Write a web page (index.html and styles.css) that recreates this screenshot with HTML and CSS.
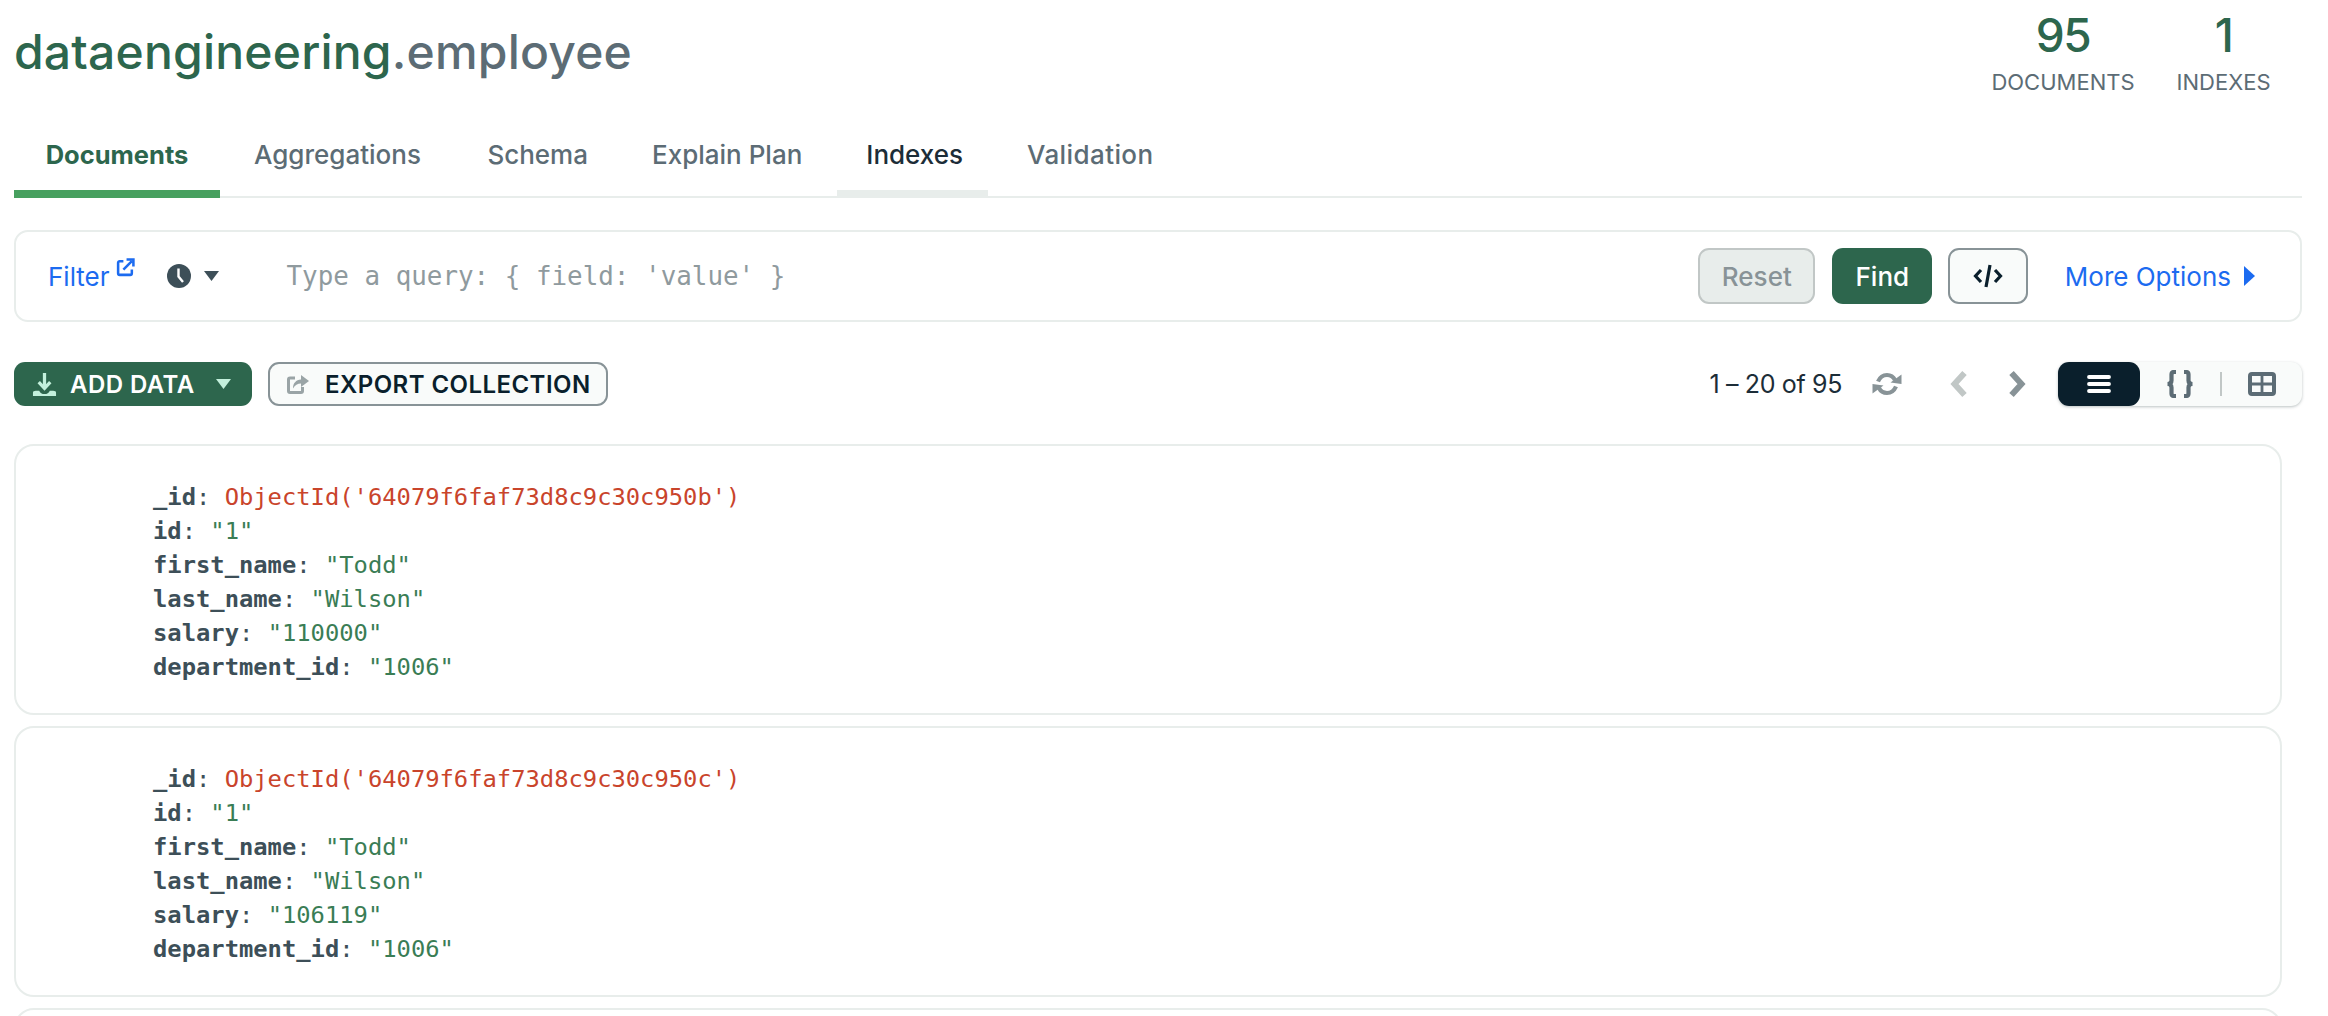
FILE: index.html
```html
<!DOCTYPE html>
<html lang="en">
<head>
<meta charset="utf-8">
<title>dataengineering.employee</title>
<link rel="stylesheet" href="styles.css">
</head>
<body>
<main class="page">
  <header class="head">
    <h1 class="title"><span class="db">dataengineering</span><span class="coll">.employee</span></h1>
    <div class="stats">
      <div class="stat stat-docs"><div class="num">95</div><div class="lab">DOCUMENTS</div></div>
      <div class="stat stat-idx"><div class="num">1</div><div class="lab">INDEXES</div></div>
    </div>
  </header>

  <nav class="tabs">
    <a class="tab tab-docs">Documents</a>
    <a class="tab tab-agg">Aggregations</a>
    <a class="tab">Schema</a>
    <a class="tab">Explain Plan</a>
    <a class="tab tab-indexes">Indexes</a>
    <a class="tab tab-valid">Validation</a>
  </nav>

  <section class="querybar">
    <a class="filter">Filter</a>
    <svg class="ext" viewBox="0 0 18 18"><path d="M7 3H3.500A1.500 1.500 0 0 0 2 4.500V14.500A1.500 1.500 0 0 0 3.500 16H13.500A1.500 1.500 0 0 0 15 14.500V11" fill="none" stroke="#1c6bf0" stroke-width="2.400"/><path d="M7 11L15 3M10 1.500H16.500V8" fill="none" stroke="#1c6bf0" stroke-width="2.400"/></svg>
    <svg class="clock" viewBox="0 0 24 24"><circle cx="12" cy="12" r="12" fill="#3d4f58"/><path d="M11.500 4.500V12.500L16 18" fill="none" stroke="#fff" stroke-width="2.400"/></svg>
    <svg class="caret" viewBox="0 0 15 10"><path d="M0 0H15L7.500 10Z" fill="#3d4f58"/></svg>
    <div class="query">Type a query: { field: 'value' }</div>
    <button class="btn reset">Reset</button>
    <button class="btn find">Find</button>
    <button class="btn code"><svg viewBox="0 0 30 26" class="code-ic"><path d="M8 7L2.500 13L8 19M22 7L27.500 13L22 19M17 2L13 24" fill="none" stroke="#0a1f2c" stroke-width="3.200"/></svg></button>
    <a class="more">More Options</a>
    <svg class="more-arrow" viewBox="0 0 11 20"><path d="M0 0L11 10L0 20Z" fill="#1c6bf0"/></svg>
  </section>

  <section class="toolbar">
    <button class="add">
      <svg class="add-ic" viewBox="0 0 26 26"><path d="M13 1V16M7 10.500L13 17L19 10.500" fill="none" stroke="#c3f0dc" stroke-width="3.400"/><path d="M1 21.500Q1 19.500 4 19.500H7.500Q9 23 13 23T18.500 19.500H22Q25 19.500 25 21.500V25H1Z" fill="#c3f0dc"/></svg>
      <span class="add-label">ADD DATA</span>
      <svg class="add-caret" viewBox="0 0 15 10"><path d="M0 0H15L7.500 10Z" fill="#c3f0dc"/></svg>
    </button>
    <button class="export">
      <svg class="export-ic" viewBox="0 0 22 20"><path d="M8 4H3Q1.500 4 1.500 5.500V17Q1.500 18.500 3 18.500H14Q15.500 18.500 15.500 17V13" fill="none" stroke="#9aa4a6" stroke-width="3"/><path d="M6 14.500C6 9 9 6 14 5.500V1L22 7L14 13V9.500C10.500 9.500 8 11 6 14.500Z" fill="#9aa4a6"/></svg>
      <span>EXPORT COLLECTION</span>
    </button>
    <div class="spacer"></div>
    <span class="count">1 – 20 of 95</span>
    <svg class="refresh" viewBox="0 0 30 24"><path d="M6 9.500C8 5 11 3 15 3C19 3 21.500 5 23 8" fill="none" stroke="#889397" stroke-width="4.200"/><path d="M18.500 10.500L29.500 12V2.500Z" fill="#889397"/><path d="M24 14.500C22 19 19 21 15 21C11 21 8.500 19 7 16" fill="none" stroke="#889397" stroke-width="4.200"/><path d="M11.500 13.500L.5 12V21.500Z" fill="#889397"/></svg>
    <svg class="chev prev" viewBox="0 0 20 28"><path d="M15.500 3L5.500 14L15.500 25" fill="none" stroke="#c1c7c6" stroke-width="6"/></svg>
    <svg class="chev next" viewBox="0 0 20 28"><path d="M4.500 3L14.500 14L4.500 25" fill="none" stroke="#889397" stroke-width="6"/></svg>
    <div class="views">
      <div class="view on"><svg class="ic-list" viewBox="0 0 24 20"><path d="M2 3H22M2 10H22M2 17H22" fill="none" stroke="#fff" stroke-width="3.800" stroke-linecap="round"/></svg></div>
      <div class="view mid"><svg class="ic-json" viewBox="0 0 28 28"><path d="M10 2H8Q5.500 2 5.500 4.500V10.500Q5.500 14 1.500 14Q5.500 14 5.500 17.500V23.500Q5.500 26 8 26H10M18 2H20Q22.500 2 22.500 4.500V10.500Q22.500 14 26.500 14Q22.500 14 22.500 17.500V23.500Q22.500 26 20 26H18" fill="none" stroke="#5c6c75" stroke-width="4.200"/></svg></div>
      <div class="sep"></div>
      <div class="view last"><svg class="ic-table" viewBox="0 0 28 24"><rect x="2" y="2" width="24" height="20" rx="2" fill="none" stroke="#5c6c75" stroke-width="4"/><path d="M2 12H26M14 2V22" stroke="#5c6c75" stroke-width="2.800"/></svg></div>
    </div>
  </section>

  <section class="docs">
    <article class="card">
      <div class="ln"><b>_id</b><i>: </i><span class="oid">ObjectId('64079f6faf73d8c9c30c950b')</span></div>
      <div class="ln"><b>id</b><i>: </i><span class="str">"1"</span></div>
      <div class="ln"><b>first_name</b><i>: </i><span class="str">"Todd"</span></div>
      <div class="ln"><b>last_name</b><i>: </i><span class="str">"Wilson"</span></div>
      <div class="ln"><b>salary</b><i>: </i><span class="str">"110000"</span></div>
      <div class="ln"><b>department_id</b><i>: </i><span class="str">"1006"</span></div>
    </article>
    <article class="card">
      <div class="ln"><b>_id</b><i>: </i><span class="oid">ObjectId('64079f6faf73d8c9c30c950c')</span></div>
      <div class="ln"><b>id</b><i>: </i><span class="str">"1"</span></div>
      <div class="ln"><b>first_name</b><i>: </i><span class="str">"Todd"</span></div>
      <div class="ln"><b>last_name</b><i>: </i><span class="str">"Wilson"</span></div>
      <div class="ln"><b>salary</b><i>: </i><span class="str">"106119"</span></div>
      <div class="ln"><b>department_id</b><i>: </i><span class="str">"1006"</span></div>
    </article>
    <article class="card"></article>
  </section>
</main>
</body>
</html>
```
FILE: styles.css
```css
* { box-sizing: border-box; }
html, body { margin: 0; height: 1016px; overflow: hidden; background: #fff; }
body { font-family: "Inter", "Liberation Sans", sans-serif; color: #5c6c75; }
.page { padding: 0 26px 0 14px; }

.head { display: flex; justify-content: space-between; height: 128px; }
.title { margin: 23px 0 0 0; font-size: 48px; line-height: 58px; font-weight: 500; letter-spacing: .2px; }
.db { color: #2d664d; }
.coll { color: #5c6c75; }

.stats { display: flex; margin-right: 31.500px; }
.stat { display: flex; flex-direction: column; align-items: center; }
.stat-docs { margin-right: 42px; }
.num { color: #2d664d; font-size: 46px; line-height: 56px; font-weight: 500; margin-top: 7px; letter-spacing: -1.500px; }
.lab { font-size: 22px; line-height: 28px; margin-top: 5px; }

.tabs { display: flex; height: 70px; border-bottom: 2px solid #e8edeb; }
.tab { height: 70px; padding: 11px 32px 0; font-size: 26px; line-height: 32px; font-weight: 500; color: #5c6c75; border-bottom: 8px solid transparent; border-radius: 6px 6px 0 0; }
.tab-docs { color: #2d664d; font-size: 25.500px; font-weight: 700; border-bottom-color: #47a05f; width: 206px; padding: 11px 0 0; text-align: center; }
.tab-agg { margin: 0 2.500px 0 2px; }
.tab-indexes { color: #1c2d38; margin: 0 7px 0 3px; padding: 11px 25px 0 29px; border-bottom-color: #e8edeb; }
.tab-valid { letter-spacing: .4px; }

.querybar { display: flex; align-items: center; height: 92px; margin-top: 32px; border: 2px solid #e8edeb; border-radius: 14px; padding: 0 45px 0 32px; }
.filter { color: #1c6bf0; font-size: 26px; }
.ext { width: 19px; height: 19px; margin: -18px 0 0 6px; }
.clock { width: 24px; height: 24px; margin-left: 32.500px; }
.caret { width: 15px; height: 10px; margin-left: 13px; }
.query { flex: 1; margin-left: 67.500px; font-family: "DejaVu Sans Mono", monospace; font-size: 25.900px; color: #8f9a9e; }
.btn { height: 56px; border-radius: 11px; font-family: inherit; font-size: 26px; font-weight: 500; padding: 0; }
.reset { width: 117px; background: #e8edeb; color: #889397; border: 2px solid #c1c7c6; }
.find { width: 100px; margin-left: 17px; background: #2d664d; color: #fff; border: none; }
.code { width: 80px; margin-left: 16px; background: #f9fbfa; border: 2px solid #889397; display: flex; align-items: center; justify-content: center; }
.code-ic { width: 30px; height: 26px; }
.more { margin-left: 36.500px; color: #1c6bf0; font-size: 26px; }
.more-arrow { width: 11px; height: 20px; margin-left: 13px; }

.toolbar { display: flex; align-items: center; height: 44px; margin-top: 40px; }
.add { display: flex; align-items: center; width: 238px; height: 44px; background: #2d664d; color: #fff; border: none; border-radius: 11px; padding: 0 0 0 18px; font-family: inherit; font-size: 24px; font-weight: 600; letter-spacing: .45px; }
.add-ic { width: 25px; height: 25px; }
.add-label { margin-left: 13px; }
.add-caret { width: 15px; height: 10px; margin-left: 21px; }
.export { display: flex; align-items: center; width: 340px; height: 44px; margin-left: 16px; background: #f9fbfa; color: #0a1f2c; border: 2px solid #889397; border-radius: 11px; padding: 0 0 0 17px; font-family: inherit; font-size: 24px; font-weight: 600; letter-spacing: .45px; }
.export-ic { width: 22px; height: 20px; }
.export span { margin-left: 16px; white-space: nowrap; }
.spacer { flex: 1; }
.count { color: #1c2d38; font-size: 25px; letter-spacing: -.35px; }
.refresh { width: 30px; height: 24px; margin-left: 30px; }
.chev { width: 20px; height: 28px; }
.prev { margin-left: 47px; }
.next { margin-left: 38px; }
.views { display: flex; align-items: center; width: 244px; height: 44px; margin-left: 31px; background: #f9fbfa; border-radius: 11px; box-shadow: 0 1px 3px rgba(60,80,80,.35); }
.view { display: flex; align-items: center; justify-content: center; height: 44px; }
.view.on { width: 82px; background: #0a1f2c; border-radius: 11px; }
.view.mid { width: 80px; }
.sep { width: 2px; height: 24px; background: #c1c7c6; }
.view.last { width: 80px; }
.ic-list { width: 24px; height: 20px; }
.ic-json { width: 28px; height: 28px; }
.ic-table { width: 28px; height: 24px; }

.docs { margin-top: 38px; width: 2268px; height: 572px; overflow: hidden; display: flex; flex-direction: column; gap: 11px; }
.card { height: 271px; flex: none; border: 2px solid #e8edeb; border-radius: 20px; padding: 34px 0 0 137px; font-family: "DejaVu Sans Mono", monospace; font-size: 23.800px; line-height: 34px; color: #3d4f58; }
.ln { white-space: pre; }
.ln b { font-weight: 700; }
.ln i { font-style: normal; }
.oid { color: #c9442b; }
.str { color: #3a7d55; }
```
